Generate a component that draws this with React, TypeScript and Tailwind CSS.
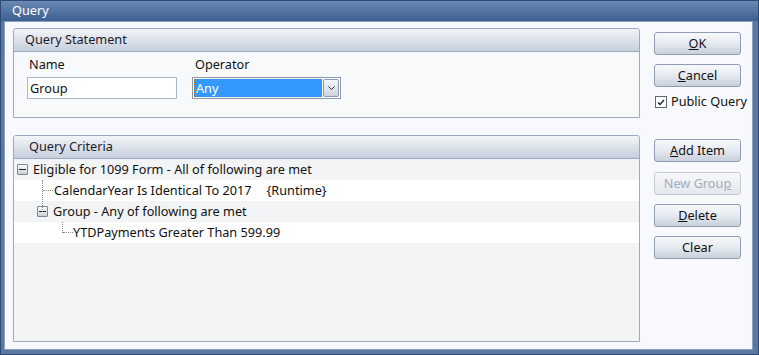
import React from "react";

const font = { fontFamily: '"Noto Sans", "Open Sans", Arial, sans-serif' };

function Btn({ children, disabled }: { children: React.ReactNode; disabled?: boolean }) {
  return (
    <div
      className={`w-[87px] h-[23px] flex items-center justify-center rounded-[3px] border text-[12.7px] ${
        disabled
          ? "border-[#c3cad6] bg-gradient-to-b from-[#f7f9fb] to-[#e3e7ee] text-[#a3acba]"
          : "border-[#8f9db4] bg-gradient-to-b from-[#f8f9fb] via-[#e6eaf0] to-[#c8d0dc] text-[#111]"
      }`}
    >
      {children}
    </div>
  );
}

function Minus() {
  return (
    <div className="w-[11px] h-[11px] border border-[#7a8699] rounded-[1px] bg-gradient-to-b from-[#ffffff] to-[#c9d0da] flex items-center justify-center">
      <div className="w-[7px] h-[1px] bg-[#222]" />
    </div>
  );
}

function PanelHeader({ title, pl }: { title: string; pl: string }) {
  return (
    <div
      className={`h-[23px] flex items-center ${pl} rounded-t-[3px] border-b border-[#9aaac4] bg-gradient-to-b from-[#f3f5f8] via-[#dde2ea] to-[#c6cfdc] text-[12.7px] text-[#1c1c2c]`}
    >
      {title}
    </div>
  );
}

export default function App() {
  return (
    <div className="w-[759px] h-[355px] bg-[#5b78a3] border border-[#2e4a75] flex flex-col" style={font}>
      <div className="h-[20px] flex items-center pl-[11px] text-[12.7px] text-white bg-gradient-to-b from-[#6b89b4] to-[#3e6090] shrink-0">
        Query
      </div>
      <div className="flex-1 ml-[3px] mr-[5px] mb-[4px] bg-[#8aa0c2] p-[1px]">
        <div className="w-full h-full bg-[#f7f9fc] flex pl-[8px] pt-[6px]">
          {/* Left column */}
          <div className="w-[627px] flex flex-col">
            <div className="h-[90px] border border-[#9aaac4] rounded-t-[3px] bg-[#f8f9fb] flex flex-col">
              <PanelHeader title="Query Statement" pl="pl-[11px]" />
              <div className="flex pl-[13px] pt-[4px] gap-[15px]">
                <div className="flex flex-col">
                  <div className="text-[12.7px] text-[#111] pl-[2px] h-[17px] leading-[17px]">Name</div>
                  <div className="mt-[4px] w-[150px] h-[22px] border border-[#a9b5c9] bg-white text-[12.7px] text-[#111] pl-[2px] leading-[20px]">
                    Group
                  </div>
                </div>
                <div className="flex flex-col">
                  <div className="text-[12.7px] text-[#111] pl-[3px] h-[17px] leading-[17px]">Operator</div>
                  <div className="mt-[4px] w-[149px] h-[22px] border border-[#8b9bb4] bg-white flex items-center p-[1px]">
                    <div className="flex-1 h-full bg-[#3399ff] border border-dotted border-[#c87a00] text-white text-[12.7px] leading-[16px] pl-[1px]">
                      Any
                    </div>
                    <div className="w-[16px] h-[18px] ml-[1px] border border-[#8d99ad] rounded-[2px] bg-gradient-to-b from-[#f5f7fa] to-[#cdd4df] flex items-center justify-center">
                      <svg width="7" height="5" viewBox="0 0 7 5">
                        <path d="M0.5 0.5 L3.5 3.5 L6.5 0.5" stroke="#333" strokeWidth="1" fill="none" />
                      </svg>
                    </div>
                  </div>
                </div>
              </div>
            </div>
            <div className="mt-[17px] h-[207px] border border-[#9aaac4] rounded-t-[3px] bg-[#f3f4f6] flex flex-col">
              <PanelHeader title="Query Criteria" pl="pl-[15px]" />
              <div className="flex flex-col text-[12.7px] text-[#111]">
                <div className="h-[21px] flex items-center bg-[#f3f4f6] pl-[3px] relative">
                  <Minus />
                  <span className="ml-[5px]">Eligible for 1099 Form - All of following are met</span>
                </div>
                <div className="h-[21px] flex items-center bg-white relative">
                  <div className="absolute left-[28px] top-0 h-[32px] border-l border-dotted border-[#888]" />
                  <div className="absolute left-[29px] top-[10px] w-[10px] border-t border-dotted border-[#888]" />
                  <span className="ml-[40px]">CalendarYear Is Identical To 2017</span>
                  <span className="ml-[15px]">{"{Runtime}"}</span>
                </div>
                <div className="h-[21px] flex items-center bg-[#f3f4f6] pl-[23px]">
                  <Minus />
                  <span className="ml-[5px]">Group - Any of following are met</span>
                </div>
                <div className="h-[21px] flex items-center bg-white relative">
                  <div className="absolute left-[48px] top-0 h-[11px] border-l border-dotted border-[#888]" />
                  <div className="absolute left-[49px] top-[10px] w-[10px] border-t border-dotted border-[#888]" />
                  <span className="ml-[59px]">YTDPayments Greater Than 599.99</span>
                </div>
              </div>
            </div>
          </div>
          {/* Right column */}
          <div className="ml-[14px] flex flex-col pt-[4px]">
            <Btn>
              <span className="underline">O</span>K
            </Btn>
            <div className="mt-[9px]">
              <Btn>
                <span className="underline">C</span>ancel
              </Btn>
            </div>
            <div className="mt-[7px] h-[16px] flex items-center text-[12.7px] text-[#111]">
              <div className="w-[12px] h-[12px] border border-[#5e6878] bg-white flex items-center justify-center ml-[1px]">
                <svg width="8" height="7" viewBox="0 0 8 7">
                  <path d="M1 3.5 L3 5.5 L7 1" stroke="#222" strokeWidth="1.4" fill="none" />
                </svg>
              </div>
              <span className="ml-[4px]">Public Query</span>
            </div>
            <div className="mt-[29px]">
              <Btn>
                <span className="underline">A</span>dd Item
              </Btn>
            </div>
            <div className="mt-[10px]">
              <Btn disabled>
                New Grou<span className="underline">p</span>
              </Btn>
            </div>
            <div className="mt-[9px]">
              <Btn>
                <span className="underline">D</span>elete
              </Btn>
            </div>
            <div className="mt-[9px]">
              <Btn>Clear</Btn>
            </div>
          </div>
        </div>
      </div>
    </div>
  );
}
